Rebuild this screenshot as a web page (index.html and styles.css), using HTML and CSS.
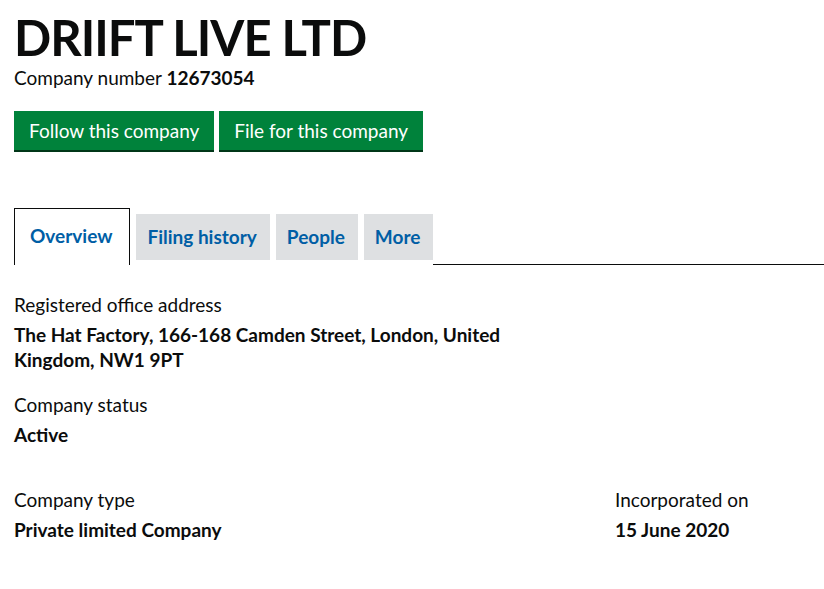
FILE: index.html
```html
<!DOCTYPE html>
<html lang="en">
<head>
<meta charset="utf-8">
<title>DRIIFT LIVE LTD</title>
<link rel="stylesheet" href="styles.css">
</head>
<body>
<main class="page">
  <h1 class="title">DRIIFT LIVE LTD</h1>
  <p class="number">Company number <strong>12673054</strong></p>
  <div class="actions">
    <a class="btn" href="#">Follow this company</a>
    <a class="btn" href="#">File for this company</a>
  </div>
  <nav class="tabs">
    <a class="tab active" href="#">Overview</a>
    <a class="tab" href="#">Filing history</a>
    <a class="tab" href="#">People</a>
    <a class="tab" href="#">More</a>
    <span class="tab-rest"></span>
  </nav>
  <dl class="field">
    <dt>Registered office address</dt>
    <dd class="address">The Hat Factory, 166-168 Camden Street, London, United Kingdom, NW1 9PT</dd>
  </dl>
  <dl class="field">
    <dt>Company status</dt>
    <dd>Active</dd>
  </dl>
  <div class="pair">
    <dl class="field">
      <dt>Company type</dt>
      <dd>Private limited Company</dd>
    </dl>
    <dl class="field">
      <dt>Incorporated on</dt>
      <dd>15 June 2020</dd>
    </dl>
  </div>
</main>
</body>
</html>
```

FILE: styles.css
```css
html, body {
  margin: 0;
  padding: 0;
  background: #ffffff;
}
body {
  font-family: Lato, "Noto Sans", sans-serif;
  color: #0b0c0c;
}
.page {
  padding: 14px 0 0 14px;
}
.title {
  margin: 0;
  font-size: 49px;
  line-height: 46px;
  font-weight: 700;
  letter-spacing: -1px;
}
.number {
  margin: 5px 0 0;
  font-size: 19px;
  line-height: 25px;
}
.number strong {
  font-weight: 700;
}
.actions {
  display: flex;
  gap: 5px;
  margin-top: 21px;
}
.btn {
  display: block;
  background: #00823b;
  color: #ffffff;
  text-decoration: none;
  font-size: 19px;
  line-height: 20px;
  padding: 10px 15px 9px;
  box-shadow: 0 2px 0 #003618;
}
.tabs {
  display: flex;
  align-items: flex-end;
  margin-top: 58px;
}
.tab {
  display: block;
  font-weight: 700;
  font-size: 19px;
  color: #005ea5;
  text-decoration: none;
  background: #dee0e2;
  line-height: 20px;
  padding: 13px 13px 13px 11px;
  margin: 0 6px 5px 0;
}
.tab.active {
  background: #fff;
  border: 1px solid #0b0c0c;
  border-bottom: 0;
  padding: 17px 17px 19px 15px;
  margin: 0 6px 0 0;
}
.tab-rest {
  flex: 1;
  align-self: stretch;
  border-bottom: 1px solid #0b0c0c;
  margin-left: -6px;
}
.field {
  margin: 0;
}
.field dt {
  font-size: 19px;
  line-height: 25px;
  margin: 0;
}
.field dd {
  margin: 5px 0 0;
  font-size: 19px;
  line-height: 25px;
  font-weight: 700;
}
.address {
  max-width: 500px;
}
.page > .field:first-of-type {
  margin-top: 27px;
}
.page > .field + .field {
  margin-top: 20px;
}
.pair {
  display: grid;
  grid-template-columns: 601px 1fr;
  margin-top: 40px;
}
```
